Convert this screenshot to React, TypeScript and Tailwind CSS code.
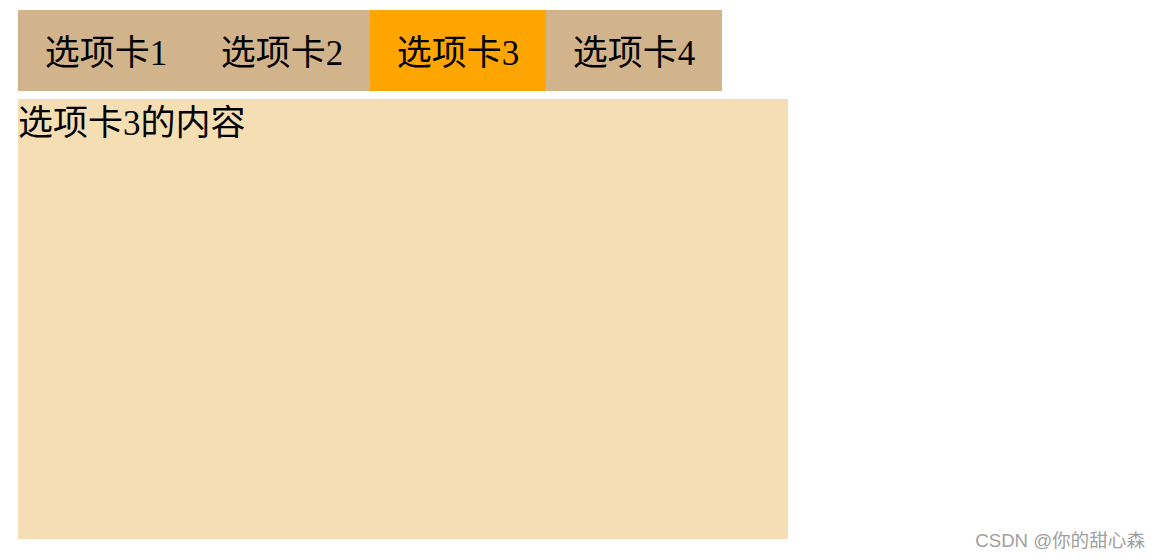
import React, { useState } from "react";

const tabs = ["选项卡1", "选项卡2", "选项卡3", "选项卡4"];

export default function App() {
  const [active, setActive] = useState(2);
  return (
    <div
      className="relative w-[1161px] h-[559px] bg-white overflow-hidden"
      style={{ fontFamily: '"Liberation Serif", "Noto Sans CJK SC", serif' }}
    >
      <div className="pl-[18px] pt-[10px]">
        <div className="flex">
          {tabs.map((t, i) => (
            <div
              key={t}
              onClick={() => setActive(i)}
              className={
                "w-[176px] h-[81px] pt-[7px] flex items-center justify-center text-[35px] text-black cursor-pointer " +
                (i === active ? "bg-[#ffa500]" : "bg-[#d2b48c]")
              }
            >
              {t}
            </div>
          ))}
        </div>
        <div className="mt-[8px] w-[770px] h-[440px] pt-[4px] bg-[#f5deb3] text-[35px] leading-[1.2] text-black">
          {tabs[active]}的内容
        </div>
      </div>
      <div
        className="absolute right-[16px] bottom-[4px] text-[18.6px] text-[#a0a0a0]"
        style={{ fontFamily: '"Liberation Sans", "Noto Sans CJK SC", sans-serif' }}
      >
        CSDN @你的甜心森
      </div>
    </div>
  );
}
